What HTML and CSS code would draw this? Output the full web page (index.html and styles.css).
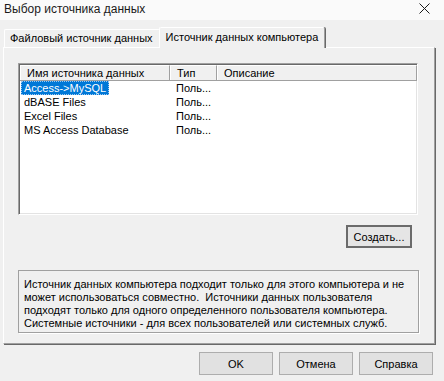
FILE: index.html
```html
<!DOCTYPE html>
<html lang="ru">
  <head>
    <meta charset="UTF-8" />
    <title>Выбор источника данных</title>
    <link rel="stylesheet" href="styles.css">
  </head>
  <body>
    <div class="dialog">
      <div class="titlebar">
        <span class="title">Выбор источника данных</span>
        <svg class="close" width="11" height="11" viewBox="0 0 11 11">
          <path d="M0.5 0.5 L10.5 10.5 M10.5 0.5 L0.5 10.5" stroke="#1a1a1a" stroke-width="1" fill="none" />
        </svg>
      </div>

      <div class="tabs">
        <div class="tab">Файловый источник данных</div>
        <div class="tab active">Источник данных компьютера</div>
      </div>

      <div class="panel">
        <div class="listview">
          <div class="lv-header">
            <div class="col col-name">Имя источника данных</div>
            <div class="col col-type">Тип</div>
            <div class="col col-desc">Описание</div>
          </div>
          <div class="lv-row">
            <div class="cell col-name"><span class="selected">Access-&gt;MySQL</span></div>
            <div class="cell col-type">Поль...</div>
          </div>
          <div class="lv-row">
            <div class="cell col-name"><span>dBASE Files</span></div>
            <div class="cell col-type">Поль...</div>
          </div>
          <div class="lv-row">
            <div class="cell col-name"><span>Excel Files</span></div>
            <div class="cell col-type">Поль...</div>
          </div>
          <div class="lv-row">
            <div class="cell col-name"><span>MS Access Database</span></div>
            <div class="cell col-type">Поль...</div>
          </div>
        </div>

        <div class="create-row">
          <button class="btn default">Создать...</button>
        </div>

        <div class="info">
          Источник данных компьютера подходит только для этого компьютера и не<br />
          может использоваться совместно.&nbsp; Источники данных пользователя<br />
          подходят только для одного определенного пользователя компьютера.<br />
          Системные источники - для всех пользователей или системных служб.
        </div>
      </div>

      <div class="footer">
        <button class="btn">OK</button>
        <button class="btn">Отмена</button>
        <button class="btn">Справка</button>
      </div>
    </div>
  </body>
</html>
```

FILE: styles.css
```css
html,
body {
  margin: 0;
  padding: 0;
}

body {
  width: 444px;
  height: 381px;
  overflow: hidden;
  background: #f0f0f0;
  font-family: "Liberation Sans", Arial, sans-serif;
  font-size: 11px;
  color: #000;
}

.dialog {
  width: 444px;
  height: 381px;
  display: flex;
  flex-direction: column;
}

.titlebar {
  height: 20px;
  background: #fafafa;
  display: flex;
  align-items: center;
  justify-content: space-between;
  padding: 0 14px 0 4px;
}

.title {
  font-size: 12px;
  color: #1a1a1a;
  margin-top: -2px;
}

.close {
  margin-top: -3px;
}

/* tab strip */
.tabs {
  height: 27px;
  display: flex;
  align-items: flex-end;
  padding-left: 4px;
}

.tab {
  height: 17px;
  line-height: 17px;
  padding: 0 6px 0 5px;
  border: 1px solid #fff;
  border-bottom: none;
  border-right-color: #d6d6d6;
  border-radius: 2px 2px 0 0;
  color: #000;
  position: relative;
  top: 0;
}

.tab.active {
  height: 20px;
  line-height: 19px;
  padding: 0 6px 0 6px;
  margin-left: -1px;
  background: #f0f0f0;
  border-right: 1px solid #a0a0a0;
  box-shadow: 1px 0 0 #696969;
  top: 1px;
  z-index: 1;
}

/* panel */
.panel {
  margin: 0 9px 0 3px;
  height: 297px;
  border-top: 1px solid #fff;
  border-left: 1px solid #fff;
  border-right: 1px solid #a0a0a0;
  border-bottom: 1px solid #a0a0a0;
  box-shadow: 1px 1px 0 #696969;
  padding: 15px 0 0 14px;
  box-sizing: border-box;
}

.listview {
  width: 400px;
  height: 152px;
  box-sizing: border-box;
  background: #fff;
  border-top: 1px solid #a0a0a0;
  border-left: 1px solid #a0a0a0;
  border-right: 1px solid #fff;
  border-bottom: 1px solid #fff;
  box-shadow: inset 1px 1px 0 #696969, inset -1px -1px 0 #e3e3e3;
  padding: 1px 0 0 1px;
}

.lv-header {
  display: flex;
  height: 15px;
  background: #f0f0f0;
  border-bottom: 1px solid #a0a0a0;
}

.col {
  height: 15px;
  line-height: 14px;
  box-sizing: border-box;
  padding-left: 6px;
  border-top: 1px solid #fff;
  border-left: 1px solid #fff;
  border-right: 1px solid #a0a0a0;
  overflow: hidden;
  white-space: nowrap;
}

.col-name {
  width: 150px;
}

.col-type {
  width: 47px;
}

.col-desc {
  width: 200px;
}

.lv-row {
  display: flex;
  height: 14px;
  line-height: 14px;
}

.cell {
  white-space: nowrap;
  overflow: hidden;
}

.cell.col-name {
  padding-left: 1px;
}

.cell.col-name span {
  display: inline-block;
  padding: 0 2px;
  border: 1px dotted transparent;
  line-height: 12px;
}

.cell.col-name span.selected {
  background: #0078d7;
  color: #fff;
  border-color: #9cc8f0;
}

.cell.col-type {
  padding-left: 5px;
  box-sizing: border-box;
}

/* buttons */
.btn {
  font-family: "Liberation Sans", Arial, sans-serif;
  font-size: 11px;
  color: #000;
  background: #e1e1e1;
  border: 1px solid #adadad;
  height: 23px;
  width: 74px;
  padding: 0;
  margin: 0;
}

.btn.default {
  width: 66px;
  border: 2px solid #6b6b6b;
  background: #e5e5e5;
}

.create-row {
  display: flex;
  justify-content: flex-end;
  padding-right: 22px;
  margin-top: 10px;
}

.info {
  width: 401px;
  height: 63px;
  box-sizing: border-box;
  margin-top: 22px;
  border: 1px solid #a0a0a0;
  box-shadow: 1px 1px 0 #fff;
  padding: 7px 0 0 5px;
  line-height: 13px;
  white-space: nowrap;
}

.footer {
  display: flex;
  justify-content: flex-end;
  gap: 6px;
  padding: 8px 11px 0 0;
}
```
